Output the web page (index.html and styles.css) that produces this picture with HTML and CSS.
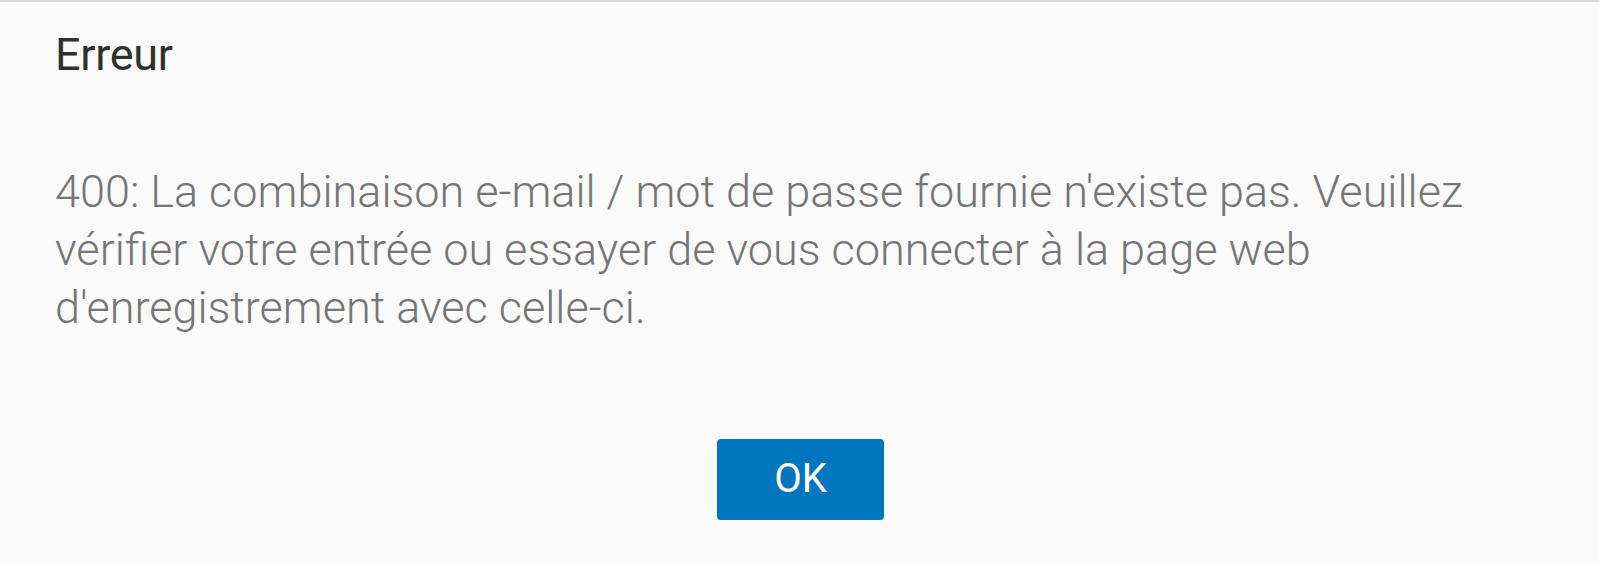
FILE: index.html
```html
<!DOCTYPE html>
<html lang="fr">
<head>
<meta charset="utf-8">
<title>Erreur</title>
<link rel="stylesheet" href="styles.css">
</head>
<body>
<div class="dialog">
  <h1 class="title">Erreur</h1>
  <p class="message">400: La combinaison e-mail / mot de passe fournie n'existe pas. Veuillez vérifier votre entrée ou essayer de vous connecter à la page web d'enregistrement avec celle-ci.</p>
  <div class="actions">
    <button class="ok">OK</button>
  </div>
</div>
</body>
</html>
```
FILE: styles.css
```css
html, body {
  margin: 0;
  padding: 0;
  background: #fafafa;
}
body {
  font-family: Roboto, "Liberation Sans", sans-serif;
  height: 564px;
  overflow: hidden;
}
.dialog {
  border-top: 2px solid #d9d9d9;
  padding: 26px 55px 0 55px;
  display: flex;
  flex-direction: column;
}
.title {
  margin: 0;
  font-size: 45px;
  line-height: 54px;
  font-weight: 400;
  color: #303030;
  letter-spacing: -0.3px;
}
.message {
  margin: 81px 0 0 0;
  font-size: 45px;
  line-height: 58px;
  font-weight: 300;
  color: #757575;
  max-width: 1440px;
}
.actions {
  display: flex;
  justify-content: center;
  margin-top: 102px;
}
.ok {
  width: 167px;
  height: 81px;
  background: #0076bf;
  color: #ffffff;
  border: none;
  border-radius: 4px;
  font-family: Roboto, "Liberation Sans", sans-serif;
  font-size: 40px;
  font-weight: 400;
  padding: 0 0 2px 0;
  margin-left: 2px;
}
```
